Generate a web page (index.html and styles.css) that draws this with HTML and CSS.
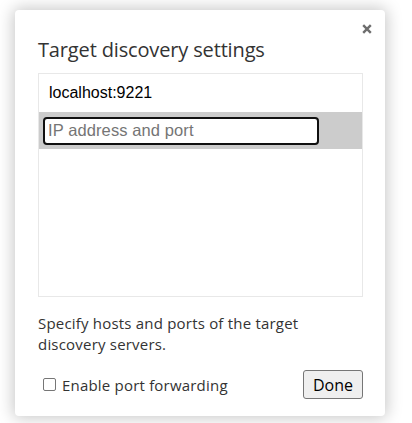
FILE: index.html
```html
<!DOCTYPE html>
<html>
<head>
<meta charset="utf-8">
<link rel="stylesheet" href="styles.css">
</head>
<body>
<div class="dialog">
  <button class="close" aria-label="Close">
    <svg width="10" height="10" viewBox="0 0 10 10"><path d="M1.2 1.2 L8.8 8.8 M8.8 1.2 L1.2 8.8" stroke="#6e6e6e" stroke-width="2.4" stroke-linecap="butt"/></svg>
  </button>
  <h1 class="title">Target discovery settings</h1>
  <div class="list">
    <div class="row">localhost:9221</div>
    <div class="row row-edit">
      <div class="input"><span class="placeholder">IP address and port</span></div>
    </div>
  </div>
  <p class="desc">Specify hosts and ports of the target discovery servers.</p>
  <div class="footer">
    <label class="check"><span class="box"></span>Enable port forwarding</label>
    <button class="done">Done</button>
  </div>
</div>
</body>
</html>
```
FILE: styles.css
```css
html, body {
  margin: 0;
  padding: 0;
  background: #ffffff;
}
body {
  padding: 10px 27px 7px 15px;
  font-family: "Open Sans", "Noto Sans", sans-serif;
  overflow: hidden;
}
.dialog {
  position: relative;
  box-sizing: border-box;
  width: 370px;
  height: 406px;
  background: #fff;
  border-radius: 4px;
  box-shadow: 0 0 16px 2px rgba(0,0,0,0.22);
  padding: 26px 22px 0 23px;
}
.close {
  position: absolute;
  top: 14px;
  right: 13px;
  width: 10px;
  height: 10px;
  padding: 0;
  border: 0;
  background: none;
  display: flex;
}
.title {
  margin: 0;
  font-size: 20px;
  font-weight: 400;
  color: #333;
  line-height: 28px;
  letter-spacing: -0.15px;
}
.list {
  margin-top: 9px;
  height: 224px;
  box-sizing: border-box;
  border: 1px solid #e8e8e8;
}
.row {
  height: 38px;
  display: flex;
  align-items: center;
  padding-left: 10px;
  font-family: "Liberation Sans", Arial, sans-serif;
  font-size: 16px;
  color: #000;
}
.row-edit {
  height: 37px;
  background: #cccccc;
  padding-left: 4px;
}
.input {
  box-sizing: border-box;
  width: 276px;
  height: 28px;
  background: #fff;
  border: 2px solid #101010;
  border-radius: 4px;
  display: flex;
  align-items: center;
  padding-left: 3px;
}
.placeholder {
  color: #757575;
  font-size: 16.5px;
  letter-spacing: 0.1px;
}
.desc {
  margin: 16px 0 0 0;
  font-size: 15px;
  line-height: 21px;
  color: #333;
  width: 300px;
  letter-spacing: 0.2px;
}
.footer {
  margin-top: 15px;
  display: flex;
  justify-content: space-between;
  align-items: center;
}
.check {
  display: flex;
  align-items: center;
  font-size: 15px;
  color: #333;
  padding-left: 5px;
  letter-spacing: 0.2px;
}
.box {
  width: 11px;
  height: 11px;
  border: 1px solid #767676;
  border-radius: 2px;
  margin-right: 6px;
  background: #fff;
}
.done {
  box-sizing: border-box;
  width: 60px;
  height: 29px;
  background: #efefef;
  border: 1px solid #767676;
  border-radius: 3px;
  font-family: "Open Sans", "Noto Sans", sans-serif;
  font-size: 16px;
  color: #000;
  padding: 0;
}
```
